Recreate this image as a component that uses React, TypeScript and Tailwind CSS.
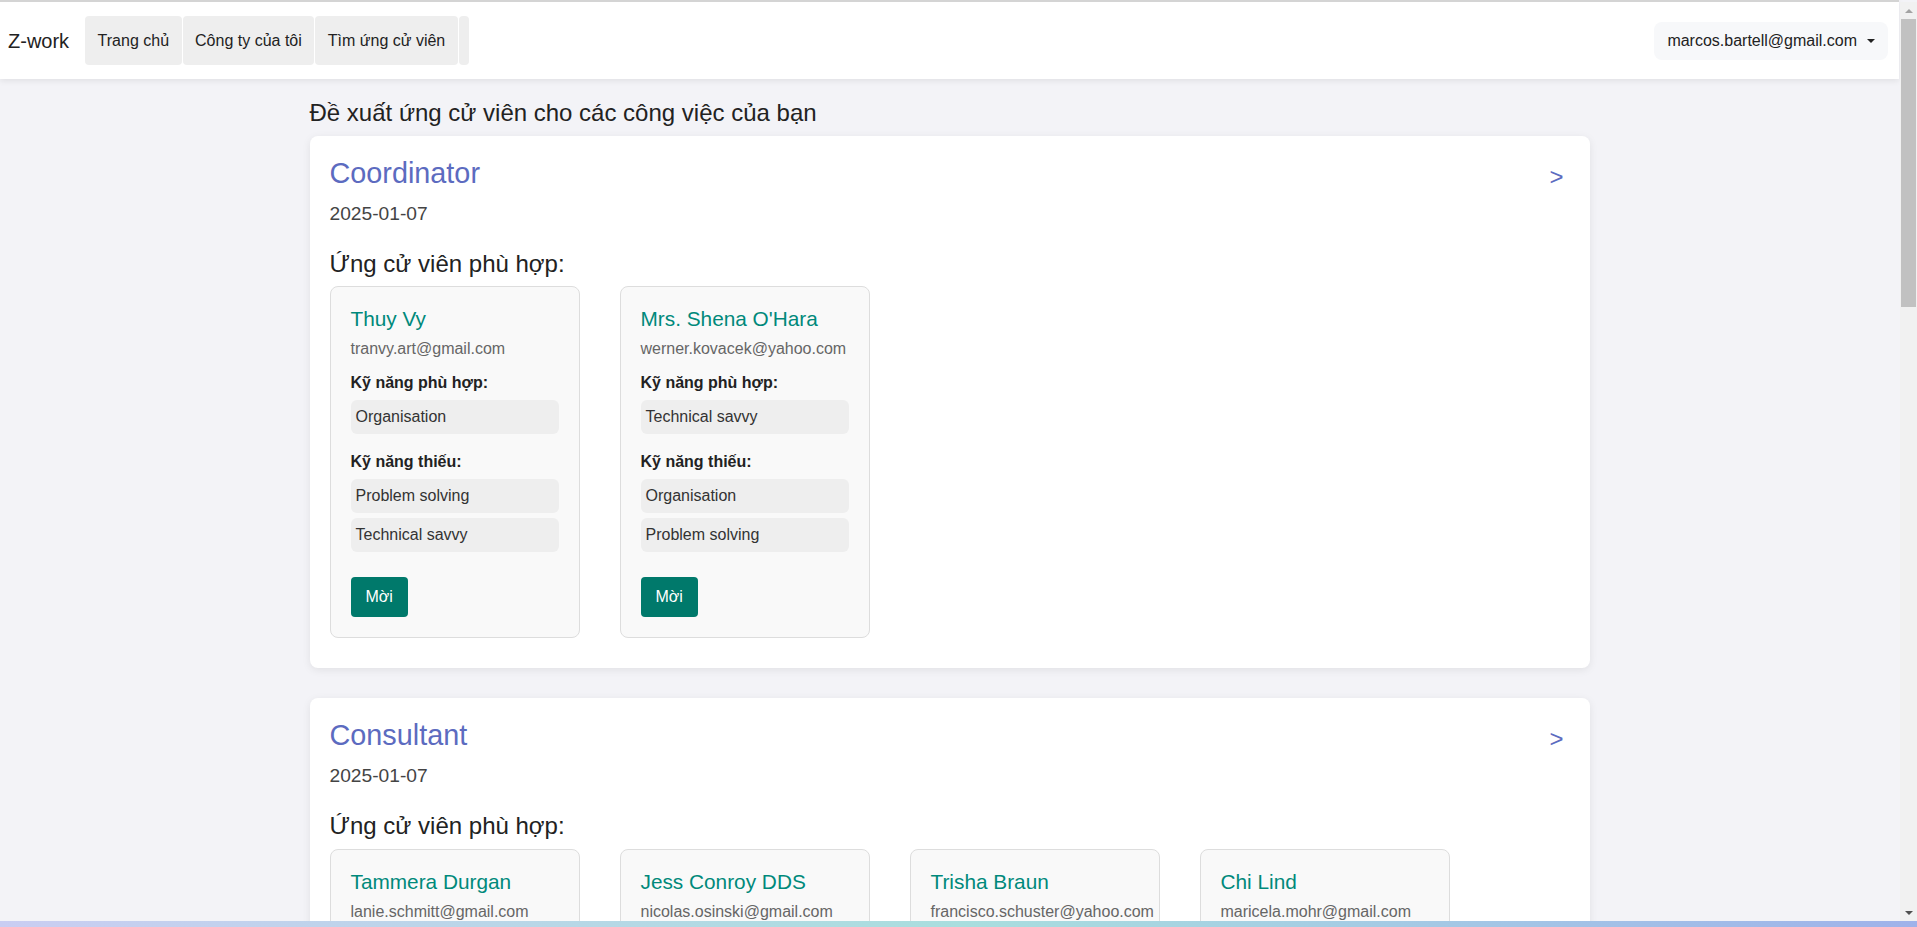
import { useState } from "react";

type Candidate = {
  name: string;
  email: string;
  matched: string[];
  missing: string[];
};

type Job = {
  title: string;
  date: string;
  candidates: Candidate[];
};

const jobs: Job[] = [
  {
    title: "Coordinator",
    date: "2025-01-07",
    candidates: [
      {
        name: "Thuy Vy",
        email: "tranvy.art@gmail.com",
        matched: ["Organisation"],
        missing: ["Problem solving", "Technical savvy"],
      },
      {
        name: "Mrs. Shena O'Hara",
        email: "werner.kovacek@yahoo.com",
        matched: ["Technical savvy"],
        missing: ["Organisation", "Problem solving"],
      },
    ],
  },
  {
    title: "Consultant",
    date: "2025-01-07",
    candidates: [
      {
        name: "Tammera Durgan",
        email: "lanie.schmitt@gmail.com",
        matched: ["Communication"],
        missing: ["Teamwork", "Leadership"],
      },
      {
        name: "Jess Conroy DDS",
        email: "nicolas.osinski@gmail.com",
        matched: ["Leadership"],
        missing: ["Communication", "Teamwork"],
      },
      {
        name: "Trisha Braun",
        email: "francisco.schuster@yahoo.com",
        matched: ["Teamwork"],
        missing: ["Communication", "Leadership"],
      },
      {
        name: "Chi Lind",
        email: "maricela.mohr@gmail.com",
        matched: ["Communication"],
        missing: ["Leadership", "Teamwork"],
      },
    ],
  },
];

const navItems = ["Trang chủ", "Công ty của tôi", "Tìm ứng cử viên"];

const SkillList = ({ label, skills }: { label: string; skills: string[] }) => (
  <div>
    <p className="font-bold text-[16px] leading-[24px] text-[#222]">{label}</p>
    <div className="mt-[5px] flex flex-col gap-[5px]">
      {skills.map((s) => (
        <div
          key={s}
          className="h-[34px] flex items-center px-[5px] rounded-md bg-[#eeeeee] text-[16px] text-[#333]"
        >
          {s}
        </div>
      ))}
    </div>
  </div>
);

const CandidateCard = ({ c }: { c: Candidate }) => (
  <div className="w-[250px] bg-[#f9f9f9] border border-[#dddddd] rounded-lg p-5">
    <h5 className="text-[20.8px] leading-[1.2] text-[#00897b]">{c.name}</h5>
    <p className="mt-[5px] text-[16px] leading-[24px] text-[#666]">{c.email}</p>
    <div className="mt-[10px] flex flex-col gap-4">
      <SkillList label="Kỹ năng phù hợp:" skills={c.matched} />
      <SkillList label="Kỹ năng thiếu:" skills={c.missing} />
    </div>
    <button className="mt-[25px] h-10 px-[15px] rounded bg-[#00796b] text-white text-[16px] font-medium">
      Mời
    </button>
  </div>
);

const JobCard = ({ job }: { job: Job }) => (
  <div className="bg-white rounded-lg shadow-[0_2px_8px_rgba(0,0,0,0.08)] px-5 pt-5 pb-[30px] mb-[30px]">
    <div className="flex justify-between items-start">
      <h3 className="text-[28.8px] leading-[1.2] text-[#5c6bc0]">{job.title}</h3>
      <button className="mt-[7px] mr-[6px] text-[24px] leading-[1.2] text-[#5c6bc0]">&gt;</button>
    </div>
    <p className="mt-[8px] text-[19.2px] leading-[28.8px] text-[#444]">{job.date}</p>
    <h4 className="mt-[21px] text-[24px] leading-[28.8px] text-[#222]">Ứng cử viên phù hợp:</h4>
    <div className="mt-[8px] flex flex-wrap gap-10">
      {job.candidates.map((c) => (
        <CandidateCard key={c.email} c={c} />
      ))}
    </div>
  </div>
);

export default function App() {
  const [active, setActive] = useState(-1);

  return (
    <div className="min-h-screen bg-[#f3f3f7] pr-[18px] font-['Liberation_Sans',Arial,sans-serif] text-[#222]">
      {/* Top nav */}
      <nav className="bg-white border-t-2 border-[#d4d4d4] h-[79px] flex items-center justify-between pl-2 pr-[11px] shadow-[0_2px_6px_rgba(0,0,0,0.08)]">
        <div className="flex items-center">
          <span className="text-[20px] text-[#222] mr-[16px]">Z-work</span>
          <div className="flex gap-px">
            {navItems.map((item, i) => (
              <button
                key={item}
                onClick={() => setActive(i)}
                className={`h-[49px] px-[12.5px] rounded bg-[#eeeeee] text-[16px] text-[#222] ${
                  active === i ? "bg-[#e2e2e2]" : ""
                }`}
              >
                {item}
              </button>
            ))}
            <div className="h-[49px] w-[10px] rounded bg-[#eeeeee]" />
          </div>
        </div>
        <button className="h-[38px] flex items-center gap-[10px] px-[13px] rounded-lg bg-[#f7f8fa] text-[16px] text-[#222]">
          marcos.bartell@gmail.com
          <span className="w-0 h-0 border-t-[4px] border-t-[#222] border-x-[4px] border-x-transparent" />
        </button>
      </nav>

      {/* Content */}
      <main className="max-w-[1280px] mx-auto">
        <h2 className="mt-[19px] mb-2 text-[24px] leading-[30px] text-[#222]">
          Đề xuất ứng cử viên cho các công việc của bạn
        </h2>
        {jobs.map((job) => (
          <JobCard key={job.title} job={job} />
        ))}
      </main>

      {/* browser scrollbar */}
      <div className="fixed top-[2px] right-0 bottom-[6px] w-[17px] bg-[#f1f1f1] flex flex-col items-center">
        <div className="h-[17px] flex items-center justify-center">
          <span className="w-0 h-0 border-b-[4px] border-b-[#a3a3a3] border-x-[4px] border-x-transparent" />
        </div>
        <div className="w-[15px] h-[288px] bg-[#c1c1c1]" />
        <div className="flex-1" />
        <div className="h-[17px] flex items-center justify-center">
          <span className="w-0 h-0 border-t-[4px] border-t-[#505050] border-x-[4px] border-x-transparent" />
        </div>
      </div>

      {/* bottom strip */}
      <div className="fixed bottom-0 left-0 right-0 h-[6px] bg-gradient-to-r from-[#c9cdf2] via-[#a9dede] to-[#9fb2ea]" />
    </div>
  );
}
